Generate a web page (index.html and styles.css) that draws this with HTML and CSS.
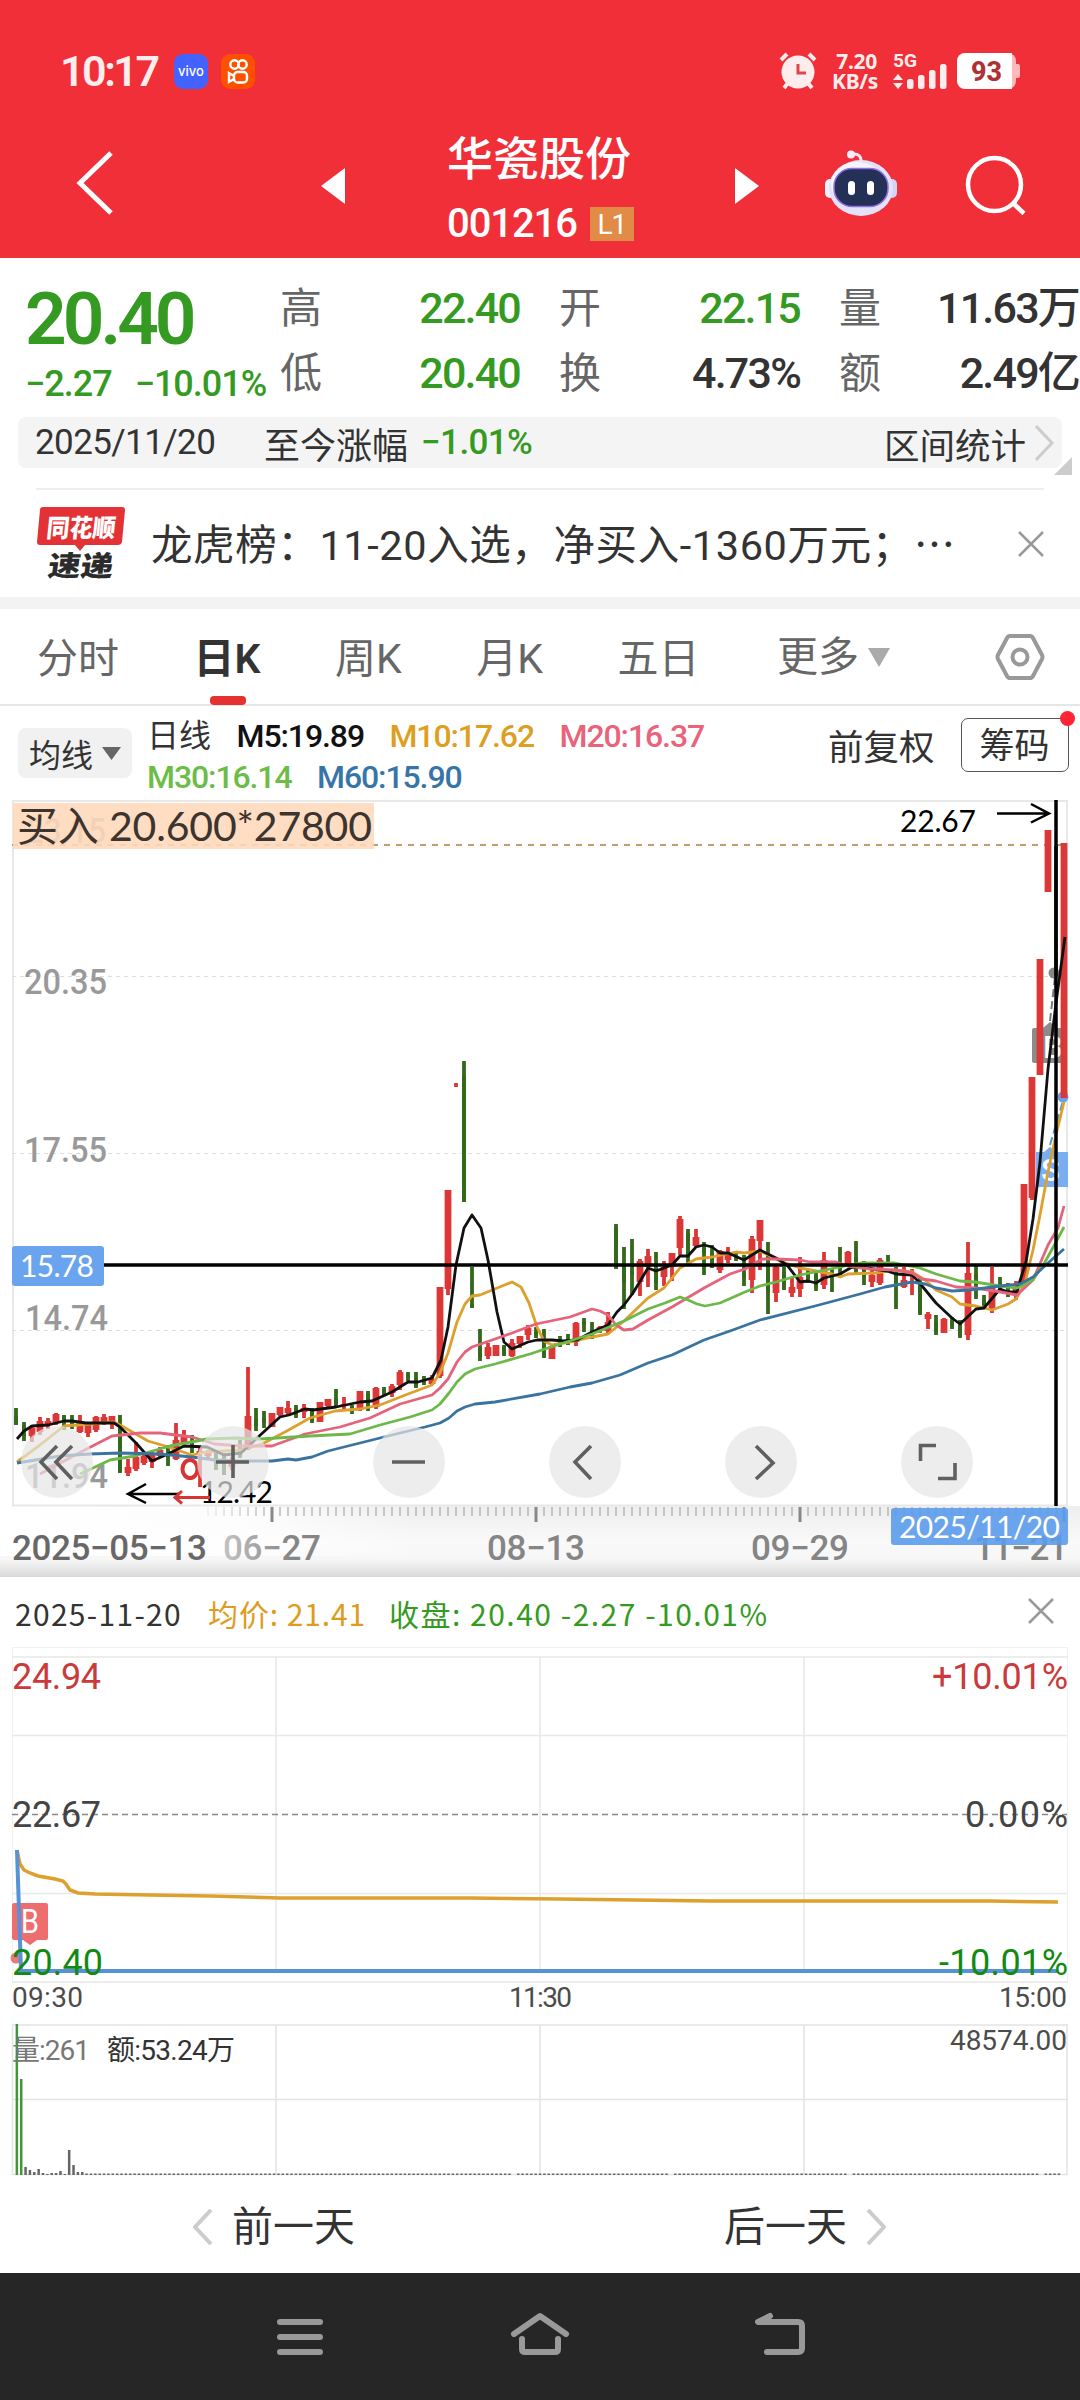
FILE: index.html
```html
<!DOCTYPE html>
<html lang="zh-CN">
<head>
  <meta charset="UTF-8" />
  <title>华瓷股份 001216</title>
  <link rel="stylesheet" href="styles.css">
</head>
<body>
  <header class="header">
    <div class="status">
      <span class="clock">10:17</span>
      <span class="app-vivo">vivo</span>
      <svg class="app-ks" width="34" height="35" viewBox="0 0 34 35" fill="none" stroke="#fff" stroke-width="2.4">
        <circle cx="13.5" cy="10.5" r="4.2" /><circle cx="21.5" cy="10.5" r="4.2" />
        <rect x="13" y="18" width="13" height="10.5" rx="3.5" /><path d="M13 22l-5-3v9l5-3" />
      </svg>
      <span class="status-gap"></span>
      <svg class="alarm" width="38" height="38" viewBox="0 0 38 38">
        <circle cx="19" cy="20" r="16.5" fill="#ffeded" />
        <path d="M2 8l6-6M36 8l-6-6M9 31l-4 5M29 31l4 5" stroke="#ffeded" stroke-width="4" />
        <path d="M19 12v9h8" fill="none" stroke="#e0444c" stroke-width="3" />
      </svg>
      <span class="speed">7.20<br>KB/s</span>
      <svg class="signal" width="56" height="38" viewBox="0 0 56 38" fill="#ffeded">
        <text x="0" y="15" textLength="24" lengthAdjust="spacingAndGlyphs" font-size="19" font-weight="700">5G</text>
        <path d="M0 28l5-6 5 6zM0 31l5 6 5-6z" />
        <rect x="14" y="27" width="6.5" height="10" rx="2.5" /><rect x="25" y="23" width="6.5" height="14" rx="2.5" />
        <rect x="36" y="18" width="6.5" height="19" rx="2.5" /><rect x="47" y="12" width="6.5" height="25" rx="2.5" />
      </svg>
      <svg class="battery" width="63" height="36" viewBox="0 0 63 36">
        <rect x="40" width="19" height="36" rx="8" fill="#ffb9bc" /><rect x="55" y="11" width="8" height="14" rx="2" fill="#ffb9bc" />
        <path d="M8 0h47v36H8a8 8 0 0 1-8-8V8a8 8 0 0 1 8-8z" fill="#fff" />
        <text x="14" y="27.500" textLength="31" lengthAdjust="spacingAndGlyphs" font-size="27" font-weight="800" fill="#b03034">93</text>
      </svg>
    </div>
    <div class="titlebar">
      <svg class="back" width="40" height="66" viewBox="0 0 40 66"><path d="M36 3L5 33l31 30" fill="none" stroke="#fff" stroke-width="5" /></svg>
      <svg class="prev" width="24" height="36"><path d="M24 0v36L0 18z" fill="#fff" /></svg>
      <div class="stock">
        <div class="stock-name">华瓷股份</div>
        <div class="stock-code">001216<span class="level">L1</span></div>
      </div>
      <svg class="next" width="24" height="36"><path d="M0 0v36l24-18z" fill="#fff" /></svg>
      <svg class="robot" width="72" height="66" viewBox="0 0 72 66">
        <path d="M27 4q10-1 9 9" fill="none" stroke="#eee8fb" stroke-width="3" /><circle cx="26" cy="4.500" r="4" fill="#f3ecfb" />
        <rect y="29" width="10" height="19" rx="5" fill="#f3f0ff" /><rect x="62" y="29" width="10" height="19" rx="5" fill="#d6d3f8" />
        <ellipse cx="36" cy="38" rx="32" ry="28" fill="#e4e2fa" /><ellipse cx="32" cy="34" rx="26" ry="22" fill="#f6f5ff" />
        <rect x="9" y="18.500" width="54" height="38" rx="18" fill="#253057" stroke="#8d70e8" stroke-width="1.500" />
        <rect x="23" y="31" width="7" height="14" rx="3.500" fill="#fff" /><rect x="42" y="31" width="7" height="14" rx="3.500" fill="#fff" />
      </svg>
      <svg class="search" width="62" height="62" viewBox="0 0 62 62" fill="none" stroke="#fff" stroke-width="4.500"><circle cx="29.500" cy="30.500" r="26.500" /><path d="M48 49l11 10.500" /></svg>
    </div>
  </header>

  <section class="quote">
    <div class="quote-main">
      <div class="price green">20.40</div>
      <div class="change green"><span>−2.27</span><span>−10.01%</span></div>
    </div>
    <div class="quote-grid">
      <span class="label">高</span><span class="val green">22.40</span>
      <span class="label">开</span><span class="val green">22.15</span>
      <span class="label">量</span><span class="val">11.63万</span>
      <span class="label">低</span><span class="val green">20.40</span>
      <span class="label">换</span><span class="val">4.73%</span>
      <span class="label">额</span><span class="val">2.49亿</span>
    </div>
  </section>

  <div class="range">
    <span class="range-date">2025/11/20</span>
    <span class="range-label">至今涨幅</span>
    <span class="range-pct green">−1.01%</span>
    <span class="range-stat">区间统计</span>
    <svg width="20" height="36" viewBox="0 0 20 36"><path d="M1 1l16 17L1 35" fill="none" stroke="#ccc" stroke-width="3" /></svg>
    <svg class="corner" width="18" height="18"><path d="M18 0v18H0z" fill="#ccc" /></svg>
  </div>

  <div class="news">
    <svg class="news-logo" width="90" height="76" viewBox="0 0 90 76">
      <path d="M7 2h79q3 0 3 3l-3 32q-1 3-4 3H49l-5 6-5-6H4q-3 0-3-3L4 5q0-3 3-3z" fill="#e33235" />
      <text transform="skewX(-6)" x="13" y="32" textLength="69" lengthAdjust="spacingAndGlyphs" font-size="25" font-weight="900" fill="#fff">同花顺</text>
      <text transform="skewX(-8)" x="21" y="71" textLength="65" lengthAdjust="spacingAndGlyphs" font-size="28" font-weight="900" fill="#2b2b2b">速递</text>
    </svg>
    <span class="news-text">龙虎榜：11-20入选，净买入-1360万元；<i>⋯</i></span>
    <svg width="26" height="26" viewBox="0 0 26 26"><path d="M1 1l24 24M25 1L1 25" stroke="#999" stroke-width="2.500" /></svg>
  </div>

  <nav class="tabs">
    <span>分时</span>
    <span class="active">日K</span>
    <span>周K</span>
    <span>月K</span>
    <span>五日</span>
    <span class="more">更多<svg width="22" height="19"><path d="M0 0h22L11 19z" fill="#aaa" /></svg></span>
    <svg class="gear" width="50" height="46" viewBox="0 0 50 46" fill="none" stroke="#999" stroke-width="4"><path d="M15 2h20q2 0 3 2l9 17q1 2 0 4l-9 17q-1 2-3 2H15q-2 0-3-2L3 25q-1-2 0-4l9-17q1-2 3-2z" /><circle cx="25" cy="23" r="7.500" /></svg>
  </nav>

  <div class="ma">
    <div class="ma-pick">均线<svg width="19" height="13"><path d="M0 0h19L9.500 13z" fill="#666" /></svg></div>
    <div class="ma-list">
      <div><span class="ma-day">日线</span><span class="m5">M5:19.89</span><span class="m10">M10:17.62</span><span class="m20">M20:16.37</span></div>
      <div><span class="m30">M30:16.14</span><span class="m60">M60:15.90</span></div>
    </div>
    <span class="adjust">前复权</span>
    <span class="chips">筹码</span>
  </div>

  <div class="kline">
    <svg id="kline" width="1080" height="777" viewBox="0 800 1080 777">
      <defs>
        <linearGradient id="axisBg" x1="0" y1="0" x2="0" y2="1">
          <stop offset="0" stop-color="#eee" /><stop offset=".5" stop-color="#f9f9f9" /><stop offset=".75" stop-color="#f7f7f7" /><stop offset="1" stop-color="#d8d8d8" />
        </linearGradient>
        <linearGradient id="fade"><stop offset="0" stop-color="#fff" /><stop offset=".6" stop-color="#fff" stop-opacity=".8" /><stop offset="1" stop-color="#fff" stop-opacity="0" /></linearGradient>
        <linearGradient id="dateFade"><stop offset="0" stop-color="#c4c4c4" /><stop offset=".7" stop-color="#858585" /></linearGradient>
      </defs>
      <rect x="0" y="1506" width="1080" height="71" fill="url(#axisBg)" />
      <rect x="0" y="1506" width="420" height="50" fill="url(#fade)" />
      <path d="M12 801H1068M13 801V1506M1067 801V1506M12 1505.500H1068" stroke="#e8e8e8" stroke-width="2" />
      <path d="M12 976.500H1067M12 1153.500H1067M12 1330.500H1067" stroke="#ddd" stroke-dasharray="4 4" />
      <path d="M12 845H1067" stroke="#c09c70" stroke-width="2" stroke-dasharray="6 6" />
      <g class="axis">
        <text x="26" y="843" textLength="80" lengthAdjust="spacingAndGlyphs">23.15</text>
        <text x="24" y="994" textLength="83" lengthAdjust="spacingAndGlyphs">20.35</text>
        <text x="24" y="1162" textLength="83" lengthAdjust="spacingAndGlyphs">17.55</text>
        <text x="25" y="1330" textLength="83" lengthAdjust="spacingAndGlyphs">14.74</text>
        <text x="25" y="1488" textLength="83" lengthAdjust="spacingAndGlyphs">11.94</text>
      </g>
      <rect x="13" y="803" width="361" height="46" fill="#ffd8ba" opacity=".88" />
      <text x="17" y="841" textLength="355" class="trade">买入 20.600*27800</text>

      <g class="marks">
        <circle cx="1054" cy="973" r="5.500" fill="#888" />
        <path d="M1050 1021l5-44" stroke="#777" stroke-width="2" stroke-dasharray="8 4" />
        <path d="M1034 1028h9l7-6 7 6h10v35h-33q-2 0-2-2v-31q0-2 2-2z" fill="#8c8c8c" />
        <text x="1043" y="1058" fill="#fff">B</text>
        <circle cx="1063" cy="1097" r="5.500" fill="#6b9fe8" />
        <path d="M1050 1145l13-44" stroke="#5a92de" stroke-width="2" stroke-dasharray="8 4" />
        <path d="M1036 1152h8l6-5 6 5h12v35h-30q-2 0-2-2z" fill="#79aef2" />
        <text x="1041" y="1181" fill="#fff">S</text>
      </g>
      <g id="candles"></g>
      <g id="averages" fill="none" stroke-width="2.800" stroke-linejoin="round"></g>
      <path d="M104 1265H1068" stroke="#000" stroke-width="3.500" />
      <path d="M1056 800V1506" stroke="#000" stroke-width="3.500" />
      <rect x="12" y="1246" width="92" height="40" rx="3" fill="#6aa4ef" />
      <text x="20" y="1277" textLength="74" class="tip">15.78</text>

      <text x="900" y="832" textLength="76" class="extreme">22.67</text>
      <path d="M997 813.500h50M1031 804l18 9.500-18 9" fill="none" stroke="#000" stroke-width="2.500" />
      <text x="200" y="1503" textLength="73" class="extreme">12.42</text>
      <path d="M180 1494h-50M146 1484l-18 10 18 9" fill="none" stroke="#000" stroke-width="2.500" />
      <path d="M210 1497.500h-34M182 1491l-7 6.500 7 6" fill="none" stroke="#d93434" stroke-width="3" />
      <ellipse cx="190" cy="1469" rx="7.500" ry="9" fill="none" stroke="#d93434" stroke-width="4" />

      <g id="ticks"></g>
      <g class="dates">
        <text x="12" y="1560" textLength="195" fill="#686868">2025−05−13</text>
        <text x="223" y="1560" textLength="98" fill="url(#dateFade)">06−27</text>
        <text x="487" y="1560" textLength="98">08−13</text>
        <text x="751" y="1560" textLength="98">09−29</text>
        <text x="974" y="1560" textLength="94">11−21</text>
      </g>
      <rect x="891" y="1508" width="177" height="37" rx="3" fill="#5a9beb" opacity=".9" />
      <text x="899" y="1538" textLength="161" class="tip">2025/11/20</text>
    </svg>
    <div class="tools">
      <span><svg viewBox="0 0 72 72"><path d="M36 20L20 36l16 17M51 20L35 36l16 17" /></svg></span>
      <span><svg viewBox="0 0 72 72"><path d="M19 36h33M36 19v33" /></svg></span>
      <span><svg viewBox="0 0 72 72"><path d="M19 36h33" /></svg></span>
      <span><svg viewBox="0 0 72 72"><path d="M42 20L26 36l16 17" /></svg></span>
      <span><svg viewBox="0 0 72 72"><path d="M31 20l17 17-17 16" /></svg></span>
      <span><svg viewBox="0 0 72 72"><path d="M35 19.500H19.500V35M54 37v15.500H37" /></svg></span>
    </div>
  </div>

  <section class="day">
    <div class="day-head">
      <span class="day-date">2025-11-20</span>
      <span class="day-avg orange">均价: 21.41</span>
      <span class="day-close green">收盘: 20.40 -2.27 -10.01%</span>
      <svg width="26" height="26" viewBox="0 0 26 26"><path d="M1 1l24 24M25 1L1 25" stroke="#999" stroke-width="2.500" /></svg>
    </div>
    <svg id="intraday" width="1080" height="536" viewBox="0 1644 1080 536">
      <path d="M12 1647.500H1068M12.500 1647V1982M1067.500 1647V1982" stroke="#f1f1f1" fill="none" />
      <path d="M12 1657H1068M276 1657V1971M540 1657V1971M804 1657V1971M12 1735.500H1067M12 1893.500H1067M12 1982H1068" stroke="#e8e8e8" stroke-width="1.500" />
      <path d="M12 1814.500H1067" stroke="#888" stroke-width="1.500" stroke-dasharray="6 4" />
      <path d="M14 1903h32q2 0 2 2v33q0 2-2 2h-9l-7 5-7-5h-9q-2 0-2-2v-33q0-2 2-2z" fill="#ee6d6f" />
      <text x="21" y="1933" textLength="18" lengthAdjust="spacingAndGlyphs" font-size="33" fill="#fff">B</text>
      <circle cx="16" cy="1958" r="5.500" fill="#e9787a" />
      <path d="M17 1850l3 14 4 6 6 3 8 3 17 3 8 2 3 3 4 6 8 3 17 1 55 1 60 1 70 2h190l90 1 150 2h280l68 1" fill="none" stroke="#dda02c" stroke-width="3.500" />
      <path d="M17 1850l4 121H1058" fill="none" stroke="#5792d6" stroke-width="4" />
      <g class="scale">
        <text x="12" y="1689" textLength="89" fill="#cb3a3a">24.94</text>
        <text x="12" y="1827" textLength="89" fill="#444">22.67</text>
        <text x="12" y="1975" textLength="91" fill="#128a12">20.40</text>
        <text x="932" y="1689" textLength="136" fill="#cb3a3a">+10.01%</text>
        <text x="965" y="1827" textLength="103" fill="#444">0.00%</text>
        <text x="939" y="1975" textLength="129" fill="#128a12">-10.01%</text>
      </g>
      <path d="M12 2025H1068M12 2099.500H1068M12 2174.500H1068M12.500 2025V2175M276 2025V2175M540 2025V2175M804 2025V2175M1067 2025V2175" stroke="#e4e4e4" stroke-width="1.500" />
      <g id="volume"></g>
      <g class="small">
        <text x="12" y="2007" textLength="71">09:30</text>
        <text x="509" y="2007" textLength="63">11:30</text>
        <text x="999" y="2007" textLength="68">15:00</text>
        <text x="12" y="2060" textLength="78" fill="#777">量:261</text>
        <text x="107" y="2060" textLength="128" fill="#333">额:53.24万</text>
        <text x="950" y="2050" textLength="117">48574.00</text>
      </g>
    </svg>
    <div class="day-nav">
      <div><svg width="20" height="36" viewBox="0 0 20 36"><path d="M18 1L2 18l16 17" /></svg>前一天</div>
      <div>后一天<svg width="20" height="36" viewBox="0 0 20 36"><path d="M2 1l16 17L2 35" /></svg></div>
    </div>
  </section>

  <footer class="sysbar">
    <svg width="60" height="50" viewBox="0 0 60 50"><path d="M10 10h40M10 25h40M10 40h40" /></svg>
    <svg width="60" height="50" viewBox="0 0 60 50"><path d="M4 22L30 4l26 18M12 27v10q0 3 3 3h30q3 0 3-3V27" /></svg>
    <svg width="60" height="50" viewBox="0 0 60 50"><path d="M20 4L8 10h40q4 0 4 4v22q0 4-4 4H17" /></svg>
  </footer>

  <script src="chart.js"></script>
</body>
</html>
```
FILE: styles.css
```css
* {
  box-sizing: border-box;
}

body {
  width: 1080px;
  margin: 0;
  background: #fff;
  color: #333;
  font-family: Roboto, "Noto Sans CJK SC", sans-serif;
}

svg {
  display: block;
  flex: none;
}

.green {
  color: #359a22 !important;
}

.orange {
  color: #dd9c20;
}

/* header */
.header {
  height: 258px;
  background: #f12f38;
  color: #fff;
}

.status {
  display: flex;
  align-items: center;
  height: 142px;
  padding: 0 60px 0 60px;
}

.clock {
  width: 114px;
  color: #ffeded;
  font-size: 43px;
  font-weight: 600;
  letter-spacing: -2.5px;
}

.app-vivo {
  width: 34px;
  height: 35px;
  border-radius: 9px;
  background: #4263ff;
  font: 500 13px/34px Inter, sans-serif;
  text-align: center;
}

.app-ks {
  margin-left: 13px;
  border-radius: 9px;
  background: #ff5000;
}

.status-gap {
  flex: 1;
}

.speed {
  width: 45px;
  margin: 0 16px 0 15px;
  color: #ffeded;
  font-family: "Noto Sans", sans-serif;
  font-size: 21px;
  font-weight: 700;
  line-height: 20px;
  text-align: right;
  letter-spacing: -0.3px;
}

.battery {
  margin-left: 8px;
}

.titlebar {
  display: flex;
  align-items: flex-start;
  padding-left: 75px;
}

.back {
  margin-top: 8px;
}

.prev {
  margin: 26px 0 0 206px;
}

.stock {
  width: 188px;
  margin: -14px 0 0 102px;
  white-space: nowrap;
}

.stock-name {
  font-size: 46px;
  font-weight: 500;
  line-height: 62px;
}

.stock-code {
  display: flex;
  align-items: center;
  margin-top: 12px;
  font-size: 40px;
  font-weight: 500;
  line-height: 44px;
  letter-spacing: -1.1px;
}

.level {
  width: 44px;
  height: 34px;
  margin-left: 13px;
  background: #e28b46;
  font-size: 28px;
  font-weight: 400;
  line-height: 35px;
  text-align: center;
}

.next {
  margin: 26px 0 0 100px;
}

.robot {
  margin: 8px 0 0 66px;
}

.search {
  margin: 12px 0 0 68px;
}

/* quote */
.quote {
  display: flex;
  height: 159px;
}

.quote-main {
  width: 280px;
  padding: 22px 0 0 25px;
}

.price {
  font-size: 73px;
  font-weight: 600;
  line-height: 78px;
  letter-spacing: -4px;
}

.change {
  display: flex;
  gap: 23px;
  margin-top: 5px;
  font-size: 36px;
  font-weight: 500;
  line-height: 42px;
  letter-spacing: -1px;
  white-space: nowrap;
}

.quote-grid {
  display: grid;
  grid-template-columns: 80px 160px 119px 161px 118px 161px;
  grid-template-rows: 65px 65px;
  padding-top: 18px;
  line-height: 65px;
  white-space: nowrap;
}

.quote-grid .label {
  color: #666;
  font-size: 42px;
}

.quote-grid .label:not(:nth-child(6n+1)) {
  padding-left: 39px;
}

.quote-grid .val {
  font-size: 43px;
  font-weight: 500;
  letter-spacing: -1.8px;
  text-align: right;
}

/* range bar */
.range {
  position: relative;
  display: flex;
  align-items: center;
  height: 51px;
  margin: 0 18px;
  padding: 0 7px 0 17px;
  border-radius: 8px;
  background: #f4f4f4;
  font-size: 35px;
}

.range-date {
  width: 229px;
  letter-spacing: -0.6px;
}

.range-label {
  width: 157px;
  font-size: 36px;
}

.range-pct {
  font-weight: 500;
  letter-spacing: -0.6px;
}

.range-stat {
  margin-left: auto;
  padding: 2px 9px 0 0;
  font-size: 35.5px;
}

.corner {
  position: absolute;
  right: -10px;
  bottom: -7px;
}

/* news */
.news {
  display: flex;
  align-items: center;
  height: 109px;
  margin: 20px 36px 0;
  border-top: 2px solid #eee;
}

.news-logo {
  margin-top: -2px;
}

.news-text {
  width: 869px;
  margin: -3px 0 0 25px;
  font-size: 41.5px;
  letter-spacing: 0.6px;
  white-space: nowrap;
}

.news-text i {
  font-style: normal;
}

/* tabs */
.tabs {
  position: relative;
  display: flex;
  height: 109px;
  padding: 0 0 0 37px;
  border-top: 12px solid #f3f3f3;
  border-bottom: 2px solid #e6e6e6;
  color: #666;
  font-size: 41px;
  line-height: 101px;
}

.tabs span {
  margin-right: 74.5px;
}

.tabs .active {
  position: relative;
  color: #333;
  font-weight: 600;
}

.tabs .active::after {
  content: "";
  position: absolute;
  left: 16px;
  top: 87px;
  width: 36px;
  height: 9px;
  border-radius: 4px;
  background: #e53131;
}

.tabs .more {
  display: flex;
  align-items: center;
  gap: 9px;
  height: 97px;
  margin-left: 3px;
  margin-right: auto;
}

.gear {
  margin: 25px 35px 0 0;
}

/* moving averages */
.ma {
  display: flex;
  height: 94px;
  padding-left: 18px;
}

.ma-pick {
  display: flex;
  align-items: center;
  justify-content: center;
  gap: 9px;
  width: 114px;
  height: 50px;
  margin-top: 22px;
  border-radius: 8px;
  background: #f1f1f1;
  font-size: 32px;
}

.ma-list {
  width: 696px;
  padding: 10px 0 0 15px;
  font-size: 32px;
  font-weight: 500;
  line-height: 41px;
  letter-spacing: -1.1px;
}

.ma-list > div {
  height: 41px;
}

.ma-list span {
  margin-right: 25.5px;
}

.ma-list .ma-day {
  font-weight: 400;
  letter-spacing: 0;
}

.m5 { color: #111; }
.m10 { color: #dd9f22; }
.m20 { color: #e9637b; }
.m30 { color: #6cbd46; }
.m60 { color: #3775a8; }

.adjust {
  margin-top: 15px;
  font-size: 35.5px;
  line-height: 54px;
}

.chips {
  position: relative;
  width: 108px;
  height: 54px;
  margin: 12px 0 0 26px;
  border: 1.5px solid #555;
  border-radius: 7px;
  font-size: 35px;
  line-height: 56px;
  text-align: center;
}

.chips::after {
  content: "";
  position: absolute;
  top: -8px;
  right: -7px;
  width: 15px;
  height: 15px;
  border-radius: 50%;
  background: #ff2336;
}

/* daily chart */
.kline {
  position: relative;
  height: 777px;
}

.axis text {
  fill: #999;
  font-size: 35px;
  font-weight: 500;
}

.dates text {
  font-size: 35px;
  font-weight: 500;
}

.dates {
  fill: #858585;
}

text {
  font-family: Roboto, "Noto Sans CJK SC", sans-serif;
}

.trade {
  fill: #3c342e;
  font-family: Lato, "Noto Sans CJK SC", sans-serif;
  font-size: 41px;
}

.marks text {
  font-size: 31px;
  font-weight: 500;
}

.tip {
  fill: #fff;
  font-family: Lato, sans-serif;
  font-size: 30px;
}

.extreme {
  font-family: Lato, sans-serif;
  font-size: 30px;
}

.tools {
  position: absolute;
  top: 626px;
  left: 21px;
  display: flex;
  gap: 104px;
}

.tools span {
  width: 72px;
  height: 72px;
  border-radius: 50%;
  background: rgba(229, 229, 229, 0.7);
}

.tools path {
  fill: none;
  stroke: #606060;
  stroke-width: 3.6;
}

/* selected day */
.day-head {
  display: flex;
  align-items: center;
  height: 67px;
  padding: 5px 26px 0 15px;
  font-family: "Noto Sans CJK SC", sans-serif;
  font-size: 30px;
  white-space: nowrap;
}

.day-date {
  width: 193px;
  letter-spacing: 1.3px;
}

.day-avg {
  width: 181px;
  letter-spacing: 0.9px;
}

.day-close {
  letter-spacing: 1.5px;
}

.day-head svg {
  margin: -4px 0 0 auto;
}

.scale text {
  font-size: 36px;
}

.small text {
  font-size: 28px;
}

.small {
  fill: #4c4c4c;
}

.day-nav {
  display: flex;
  height: 93px;
  padding-left: 193px;
  font-size: 41px;
  line-height: 92px;
}

.day-nav div {
  display: flex;
  flex: none;
  align-items: center;
  gap: 19px;
  width: 531px;
}

.day-nav div:last-child {
  width: 200px;
}

.day-nav path {
  fill: none;
  stroke: #ccc;
  stroke-width: 4;
}

/* system buttons */
.sysbar {
  display: flex;
  justify-content: center;
  gap: 180px;
  height: 127px;
  padding-top: 39px;
  background: #262626;
}

.sysbar path {
  fill: none;
  stroke: #999;
  stroke-width: 6;
  stroke-linecap: round;
  stroke-linejoin: round;
}
```
FILE: chart.js
```js
const NS = "http://www.w3.org/2000/svg";

function add(parent, tag, attrs) {
  const el = document.createElementNS(NS, tag);
  for (const key in attrs) el.setAttribute(key, attrs[key]);
  document.getElementById(parent).appendChild(el);
}

// one candle per trading day: colour high low [body top, body bottom]
const candles = `g 1408 1425 1416 1424,g 1422 1441 1426 1436,r 1425 1442 1428 1436,r 1417 1435 1421 1432,r 1418 1429 1421 1425,
r 1413 1425 1414 1423,g 1415 1430 1416 1422,g 1415 1429 1421 1427,r 1415 1433 1423 1432,r 1423 1437 1425 1433,
r 1416 1432 1417 1430,r 1414 1425 1417 1423,r 1416 1429 1416 1423,g 1415 1473 1427 1472,r 1459 1476 1467 1473,
r 1442 1471 1457 1469,r 1453 1465 1456 1463,r 1452 1468 1453 1462,r 1447 1458 1450 1456,g 1445 1466 1448 1457,
r 1423 1460 1440 1459,r 1430 1447 1437 1443,g 1435 1453 1440 1447,r 1447 1487 1451 1454,r 1450 1460 1452 1456,
g 1450 1470 1453 1463,g 1453 1475 1457 1468,r 1457 1470 1459 1467,g 1440 1458 1448 1456,r 1367 1450 1416 1449,
g 1408 1431 1419 1426,g 1411 1428 1418 1423,r 1413 1427 1413 1427,r 1407 1416 1407 1415,r 1401 1415 1408 1413,
g 1405 1418 1408 1415,r 1404 1418 1408 1412,g 1408 1423 1411 1421,r 1402 1422 1402 1422,r 1399 1409 1399 1406,
g 1389 1407 1398 1405,r 1397 1411 1404 1406,g 1405 1414 1407 1410,r 1391 1411 1391 1410,g 1391 1411 1394 1407,
r 1387 1409 1388 1407,g 1387 1396 1389 1393,r 1384 1397 1386 1393,r 1370 1390 1372 1385,g 1372 1381 1374 1378,
g 1372 1388 1378 1387,g 1376 1385 1379 1383,r 1375 1385 1379 1384,r 1287 1378 1287 1376,r 1190 1295 1190 1289,
r 1083 1087,g 1061 1202 1076 1202,g 1267 1308 1304 1307,g 1329 1361 1347 1357,r 1343 1359 1347 1356,
r 1345 1356 1345 1356,g 1345 1356 1346 1355,r 1339 1357 1343 1356,r 1336 1348 1336 1344,r 1325 1340 1328 1335,
g 1327 1338 1332 1336,g 1329 1358 1339 1357,r 1345 1359 1346 1359,g 1336 1347 1339 1342,g 1334 1345 1339 1343,
r 1322 1346 1323 1342,g 1318 1332 1322 1325,g 1322 1339 1330 1337,r 1326 1333 1327 1331,r 1312 1333 1322 1331,
g 1224 1269 1227 1268,g 1247 1309 1265 1283,g 1239 1295 1271 1275,r 1259 1296 1261 1282,r 1249 1287 1256 1267,
g 1252 1290 1268 1283,r 1261 1286 1267 1277,r 1253 1281 1253 1267,r 1216 1255 1219 1248,g 1229 1263 1233 1257,
r 1229 1247 1237 1246,g 1242 1275 1245 1253,g 1245 1268 1253 1267,r 1250 1273 1251 1270,r 1247 1263 1252 1260,
g 1253 1261 1256 1259,g 1255 1286 1273 1278,r 1236 1293 1239 1280,r 1220 1270 1220 1241,g 1242 1314 1253 1292,
r 1265 1302 1267 1293,g 1267 1290 1272 1289,r 1277 1297 1287 1293,r 1257 1297 1277 1289,g 1270 1283 1273 1279,
g 1272 1291 1275 1288,r 1252 1289 1260 1285,g 1268 1292,g 1247 1275,r 1251 1267 1252 1266,
g 1241 1273 1257 1270,g 1261 1285 1270 1278,r 1270 1287 1275 1282,r 1258 1285 1260 1283,g 1255 1264,
g 1267 1309 1269 1286,r 1267 1288 1280 1287,r 1269 1295,g 1278 1315 1282 1313,r 1312 1329 1314 1319,
g 1315 1335 1322 1332,r 1318 1333 1319 1333,g 1317 1329 1321 1326,g 1320 1338 1325 1336,r 1242 1340 1273 1335,
g 1266 1299 1274 1285,g 1295 1307 1300 1305,r 1267 1313 1287 1308,g 1277 1292 1283 1290,g 1283 1297 1288 1293,
r 1281 1300 1286 1293,r 1184 1283 1184 1283,r 1077 1200 1077 1198,r 959 1075 959 1075,r 830 892 830 892,
g 846 975 862 975,r 843 1098 843 1098`;

candles.split(",").forEach((row, i) => {
  const [type, high, low, top, bottom] = row.trim().split(" ");
  const x = 16 + i * 8;
  const fill = type === "r" ? "#dc3737" : "#33691b";
  add("candles", "rect", { x: x - 1.9, y: high, width: 3.8, height: low - high, fill });
  if (top) {
    const w = type === "r" ? 6.8 : 4;
    add("candles", "rect", { x: x - w / 2, y: top, width: w, height: bottom - top, fill });
  }
});

const averages = {
  "#dda02c": "17,1462 40,1445 64,1426 90,1424 114,1422 120,1425 148,1441 165,1446 192,1455 207,1452 240,1450 262,1444 285,1432 310,1418 335,1411 360,1409 380,1405 408,1394 432,1385 440,1373 448,1353 457,1322 465,1304 472,1296 480,1295 512,1282 521,1287 529,1303 537,1327 544,1341 552,1345 575,1341 592,1337 608,1334 624,1321 648,1298 664,1288 680,1268 696,1259 712,1257 736,1252 744,1253 760,1251 780,1261 800,1268 816,1271 832,1274 840,1277 848,1274 875,1273 895,1270 912,1272 925,1280 936,1290 952,1297 960,1304 976,1306 992,1310 1008,1304 1016,1299 1025,1283 1033,1250 1040,1215 1048,1172 1056,1135 1064,1102",
  "#111": "17,1439 24,1431 32,1426 48,1425 64,1421 72,1421 86,1423 114,1423 120,1427 136,1443 152,1461 168,1454 184,1446 207,1447 224,1455 241,1453 256,1439 280,1417 289,1415 305,1409 313,1410 336,1407 360,1402 372,1401 392,1392 408,1382 418,1382 432,1378 441,1360 448,1327 456,1265 464,1228 472,1215 481,1228 488,1260 497,1312 504,1342 512,1349 528,1342 537,1340 552,1340 563,1341 577,1340 592,1332 608,1325 617,1312 624,1305 633,1293 648,1268 656,1271 672,1265 680,1256 688,1256 696,1247 704,1245 712,1247 720,1253 728,1253 744,1260 760,1250 776,1258 787,1265 800,1282 808,1281 816,1283 824,1278 832,1276 840,1274 852,1267 867,1268 887,1271 896,1274 912,1275 918,1281 936,1303 952,1318 960,1324 976,1309 984,1308 1000,1289 1008,1292 1017,1292 1019,1284 1026,1262 1033,1219 1040,1162 1048,1069 1056,1003 1065,937",
  "#e5647b": "40,1474 75,1455 112,1436 140,1433 160,1433 192,1437 215,1444 240,1446 272,1446 305,1434 340,1427 370,1418 400,1404 432,1395 440,1388 448,1379 457,1362 465,1352 472,1347 495,1339 512,1333 536,1324 570,1317 592,1309 600,1311 608,1315 616,1325 624,1330 633,1329 648,1320 672,1307 704,1288 730,1274 745,1269 762,1259 776,1259 800,1260 810,1262 836,1262 848,1266 870,1269 895,1270 912,1273 922,1279 936,1281 956,1287 975,1288 995,1291 1017,1295 1033,1280 1048,1245 1058,1228 1064,1206",
  "#6cb94a": "80,1474 110,1460 135,1456 170,1446 207,1439 235,1438 260,1439 310,1436 350,1434 380,1425 410,1417 432,1410 440,1404 449,1393 457,1382 465,1374 475,1369 495,1364 530,1354 560,1344 592,1334 624,1321 648,1309 665,1303 680,1297 688,1300 697,1304 705,1306 720,1303 745,1292 760,1286 776,1282 800,1275 830,1269 850,1265 862,1263 895,1263 920,1268 936,1274 960,1281 975,1282 1000,1286 1017,1288 1033,1280 1045,1262 1056,1242 1064,1227",
  "#39739f": "17,1463 60,1456 90,1454 120,1453 160,1454 192,1457 215,1460 240,1461 272,1461 288,1459 296,1460 312,1457 328,1451 360,1443 392,1435 425,1427 440,1423 449,1418 457,1411 465,1407 475,1404 495,1402 540,1394 570,1387 592,1383 620,1375 648,1363 672,1355 704,1340 730,1331 760,1320 815,1306 830,1302 860,1294 885,1287 912,1282 925,1284 936,1288 952,1291 970,1290 985,1288 1000,1286 1020,1284 1033,1277 1048,1263 1064,1249"
};

for (const stroke in averages) {
  add("averages", "polyline", { points: averages[stroke], stroke });
}

// date ruler, every 33rd tick is a labelled one
for (let x = 208; x <= 1064; x += 8) {
  const major = (x - 272) % 264 === 0;
  add("ticks", "rect", {
    x: major ? x - 1.5 : x - 0.5,
    y: 1507,
    width: major ? 3 : 1,
    height: major ? 15 : 9,
    fill: major ? "#888" : "#999",
    opacity: Math.min(1, (x - 190) / 80)
  });
}

// minute volume
const volume = [151, 96, 8, 5, 3, 6, 2, 1, 2, 2, 4, 1, 25, 10, 3, 3];
for (let i = 0; i < 241; i++) {
  const x = 16.8 + i * 4.36;
  if (x > 1060) break;
  if ([114, 150, 191, 235].includes(i)) continue;
  const h = volume[i] || 1.5;
  add("volume", "rect", { x: x - 1.2, y: 2175 - h, width: 2.5, height: h, fill: i < 2 ? "#429638" : "#666" });
}
```
